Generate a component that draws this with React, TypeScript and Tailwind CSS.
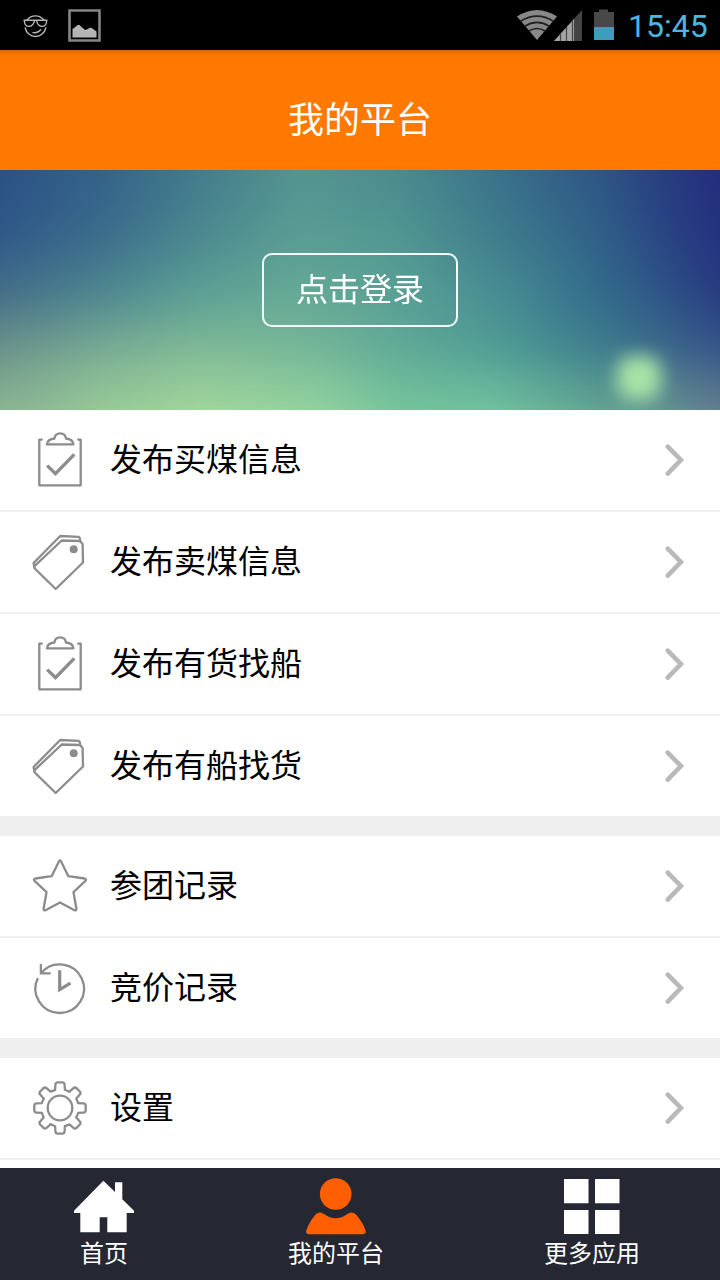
import React from "react";

type IconProps = { className?: string };

const line = {
  fill: "none",
  stroke: "#8c8c8c",
  strokeWidth: 2.3,
  strokeLinecap: "round" as const,
  strokeLinejoin: "round" as const,
};

function ClipboardIcon() {
  return (
    <svg className="size-[60px] shrink-0" viewBox="0 0 60 60" {...line}>
      <path d="M11.8 9.6H9.3V55.3H50.7V9.6H48.2" />
      <path d="M16.9 14.3H43.5C43 10.5 40.5 8.9 36 8.5C35.5 5 33.3 3.3 30.2 3.3S24.9 5 24.4 8.5C20 8.9 17.4 10.5 16.9 14.3Z" />
      <path d="M17.2 35.6L25.5 43.6L44.3 24.4" strokeWidth="3.4" strokeLinecap="butt" strokeLinejoin="miter" />
    </svg>
  );
}

function TagIcon() {
  return (
    <svg className="size-[60px] shrink-0" viewBox="0 0 60 60" {...line}>
      <path d="M4.5 36.3L25.7 57L53 30.5L52.6 12L50 9L31.7 8.5L4.5 34.2Z" />
      <path d="M4.2 34.5L3.6 31L30.2 4L48.5 4.8Q50 5 50.2 8.5" />
      <circle cx="43.7" cy="17.3" r="4" fill="#8c8c8c" stroke="none" />
    </svg>
  );
}

function StarIcon() {
  return (
    <svg className="size-[60px] shrink-0" viewBox="0 0 60 60" {...line}>
      <path d="M29 5.3Q30 3.6 31 5.3L38.3 20.2L54.6 22.5Q57 23.2 55.4 24.9L43.5 36.2L46.4 52.8Q46.4 55 44.5 54.2L30 46.4L15.5 54.2Q13.6 55 13.6 52.8L16.5 36.2L4.6 24.9Q3 23.2 5.4 22.5L21.7 20.2Z" />
    </svg>
  );
}

function ClockIcon() {
  return (
    <svg className="size-[60px] shrink-0" viewBox="0 0 60 60" {...line} strokeLinecap="butt">
      <path d="M7.9 20A24.3 24.3 0 1 0 11 15.2" />
      <path d="M10.9 6V15.4H20.7" strokeLinejoin="miter" />
      <path d="M29.7 12.3V31.6L40.4 25.2" strokeWidth="3.2" strokeLinejoin="miter" />
    </svg>
  );
}

const gearTooth =
  "M25.1 11.8L25.4 6.8Q25.6 4.3 27.6 4.3H32.4Q34.4 4.3 34.6 6.8L34.9 11.8Q37.2 12.8 39.4 13.7";

function GearIcon() {
  return (
    <svg className="size-[60px] shrink-0" viewBox="0 0 60 60" {...line}>
      {[0, 45, 90, 135, 180, 225, 270, 315].map((angle) => (
        <path key={angle} d={gearTooth} transform={`rotate(${angle} 30 30)`} />
      ))}
      <circle cx="30" cy="30" r="12.3" />
    </svg>
  );
}

function Chevron() {
  return (
    <svg className="h-10 w-6 shrink-0" viewBox="0 0 24 40" fill="none" stroke="#b9b9b9" strokeWidth="4.6" strokeLinecap="round" strokeLinejoin="miter">
      <path d="M5.7 6.6L18.9 20L5.7 33.6" />
    </svg>
  );
}

function HomeIcon({ className }: IconProps) {
  return (
    <svg className={className} viewBox="0 0 60 60" fill="#fff">
      <path d="M29.4 4.7L41 16V6.3H48.3V23.3L60 34.7V37H52.7V56.3H33.3V41.2H25.7V56.3H6.3V37H0V34.7Z" />
    </svg>
  );
}

function PersonIcon({ className }: IconProps) {
  return (
    <svg className={className} viewBox="0 0 60 60" fill="#ff5f00">
      <circle cx="29.7" cy="18" r="15.8" />
      <path d="M14.5 36.5C19 37.5 22 42.2 29.7 42.2S40.5 37.5 45 36.5Q48 36 50.5 39Q57 47 59.4 54Q60.5 58.3 57 58.3H2.8Q-.7 58.3 .4 54Q2.8 47 9 39Q11.5 36 14.5 36.5Z" />
    </svg>
  );
}

function AppsIcon({ className }: IconProps) {
  return (
    <svg className={className} viewBox="0 0 60 60" fill="#fff">
      <path d="M2 3h24.5v24.3H2zM33 3h24.5v24.3H33zM2 34h24.5v24H2zM33 34h24.5v24H33z" />
    </svg>
  );
}

function StatusBar() {
  return (
    <div className="flex h-[50px] shrink-0 items-center justify-between bg-black pr-[12px] pl-[23px]">
      <div className="flex items-center gap-[20px]">
        <svg className="size-[25px]" viewBox="0 0 25 25" fill="none" stroke="#b4b4b4" strokeWidth="1.4" strokeLinecap="round">
          <path d="M4 7A10.6 10.6 0 0 1 20.8 7M2.2 15A10.5 10.5 0 0 0 22.8 15" />
          <path d="M1 7.2H24M1.4 7.4Q1.3 13.2 6 13.4Q10.4 13.4 11.5 7.4M13.5 7.4Q14.6 13.4 19 13.4Q23.7 13.2 23.6 7.4" />
          <path d="M10 19.6Q15 20.5 17.7 16.7" />
        </svg>
        <svg className="size-[33px]" viewBox="0 0 33 33" fill="none">
          <path d="M1.5 1.5h30v30h-30z" stroke="#858585" strokeWidth="2.6" />
          <path d="M4.5 28.5V20L8 17.5Q10.5 14 13 17.5L17 21L20 20Q22.5 17.5 25 20L28.5 22.5V28.5Z" fill="#b5b5b5" />
        </svg>
      </div>
      <div className="flex items-center">
        <svg className="h-[34px] w-[98px]" viewBox="0 0 98 34">
          <path d="M0 8.5Q20-4.5 40 8.5L20 32Z" fill="#888" />
          <path d="M3.5 13.3Q20 3 36.5 13.3M7.7 18.2Q20 10.5 32.3 18.2M12 23Q20 18 28 23" fill="none" stroke="#202020" strokeWidth="1.6" />
          <path d="M37 33L65 2V33Z" fill="#454545" />
          <path d="M37 33L57 11V33Z" fill="#a3a3a3" />
          <path d="M43.5 26V33M49.5 19V33M55.5 13V33M61 7V33" stroke="#444" strokeWidth="1.2" />
          <path d="M77 4H82V1.5H91V4H97V19H77Z" fill="#484848" />
          <path d="M77 19H97V32H77Z" fill="#3d9dbd" />
        </svg>
        <span className="ml-[13px] w-[80px] pt-[1px] font-[Roboto,sans-serif] text-[32px] leading-[40px] whitespace-nowrap text-[#4db5e2]">15:45</span>
      </div>
    </div>
  );
}

function LoginBanner() {
  return (
    <div className="isolate grid h-[240px] shrink-0 overflow-hidden">
      <div className="[grid-area:1/1] bg-[linear-gradient(90deg,#2b5184_0px,#33628a_100px,#437b8c_200px,#549491_300px,#4a8a8e_400px,#3a708b_500px,#2e5585_600px,#283f80_660px,#252d7e_720px)]" />
      <div className="[grid-area:1/1] bg-[linear-gradient(90deg,#2f568a_0px,#3a6a8b_100px,#4b8790_200px,#5a9d94_300px,#509691_400px,#3e7b8c_500px,#306088_600px,#2a4683_660px,#252f7f_720px)] [mask-image:linear-gradient(transparent_0px,black_60px)]" />
      <div className="[grid-area:1/1] bg-[linear-gradient(90deg,#426c87_0px,#4c8590_100px,#5a9f94_200px,#65a996_300px,#589f95_400px,#488c93_500px,#326a8c_600px,#2e5587_660px,#273880_720px)] [mask-image:linear-gradient(transparent_60px,black_120px)]" />
      <div className="[grid-area:1/1] bg-[linear-gradient(90deg,#6b928a_0px,#79ab93_100px,#80ba96_200px,#77b798_300px,#60a996_400px,#4e9c94_500px,#3e7e8d_600px,#3c6b8b_660px,#37548a_720px)] [mask-image:linear-gradient(transparent_120px,black_180px)]" />
      <div className="[grid-area:1/1] bg-[linear-gradient(90deg,#8cb593_0px,#9bcd98_100px,#a5d99c_200px,#95d59f_320px,#77c79c_400px,#76c79f_490px,#67a892_600px,#6a9b91_660px,#667f8e_720px)] [mask-image:linear-gradient(transparent_180px,black_240px)]" />
      <div className="z-[1] backdrop-blur-[18px] [grid-area:1/1]" />
      <div className="z-[2] mr-[59px] mb-[10px] size-11 self-end justify-self-end rounded-[16px] bg-[#a8e4a6] blur-[9px] [grid-area:1/1]" />
      <div className="z-[3] flex items-center justify-center [grid-area:1/1]">
        <button className="h-[74px] w-[196px] rounded-[10px] border-2 border-[#f2fffc] pb-[6px] text-[32px] leading-[40px] text-white">点击登录</button>
      </div>
    </div>
  );
}

type Row = { label: string; Icon: () => React.JSX.Element };

const groups: Row[][] = [
  [
    { label: "发布买煤信息", Icon: ClipboardIcon },
    { label: "发布卖煤信息", Icon: TagIcon },
    { label: "发布有货找船", Icon: ClipboardIcon },
    { label: "发布有船找货", Icon: TagIcon },
  ],
  [
    { label: "参团记录", Icon: StarIcon },
    { label: "竞价记录", Icon: ClockIcon },
  ],
  [{ label: "设置", Icon: GearIcon }],
];

const tabs = [
  { label: "首页", Icon: HomeIcon, width: "w-12" },
  { label: "我的平台", Icon: PersonIcon, width: "w-24" },
  { label: "更多应用", Icon: AppsIcon, width: "w-24" },
];

export default function App() {
  return (
    <div className="flex h-[1280px] w-[720px] flex-col overflow-hidden bg-white font-['Noto_Sans_CJK_SC',sans-serif] text-black">
      <StatusBar />
      <header className="flex h-[120px] shrink-0 items-center justify-center bg-[linear-gradient(#d66b12_0px,#f37606_4px,#ff7900_8px)] pt-[14px]">
        <h1 className="text-[36px] leading-[44px] font-normal text-white">我的平台</h1>
      </header>
      <LoginBanner />
      <main className="flex min-h-0 flex-1 flex-col gap-5 overflow-hidden bg-[#efefef]">
        {groups.map((rows, i) => (
          <section key={i} className="shrink-0 divide-y-2 divide-[#efefef] bg-white">
            {rows.map(({ label, Icon }) => (
              <div key={label} className="box-content flex h-[100px] items-center pr-[34px] pl-[30px]">
                <Icon />
                <span className="ml-5 flex-1 pb-[7px] text-[32px] leading-[40px]">{label}</span>
                <Chevron />
              </div>
            ))}
            {i === groups.length - 1 && <div className="h-5" />}
          </section>
        ))}
      </main>
      <nav className="flex h-28 shrink-0 justify-between bg-[#252733] px-20 pt-2">
        {tabs.map(({ label, Icon, width }) => (
          <div key={label} className={`flex flex-col items-center ${width}`}>
            <Icon className="size-[60px] shrink-0" />
            <span className="text-[24px] leading-[32px] whitespace-nowrap text-white">{label}</span>
          </div>
        ))}
      </nav>
    </div>
  );
}
